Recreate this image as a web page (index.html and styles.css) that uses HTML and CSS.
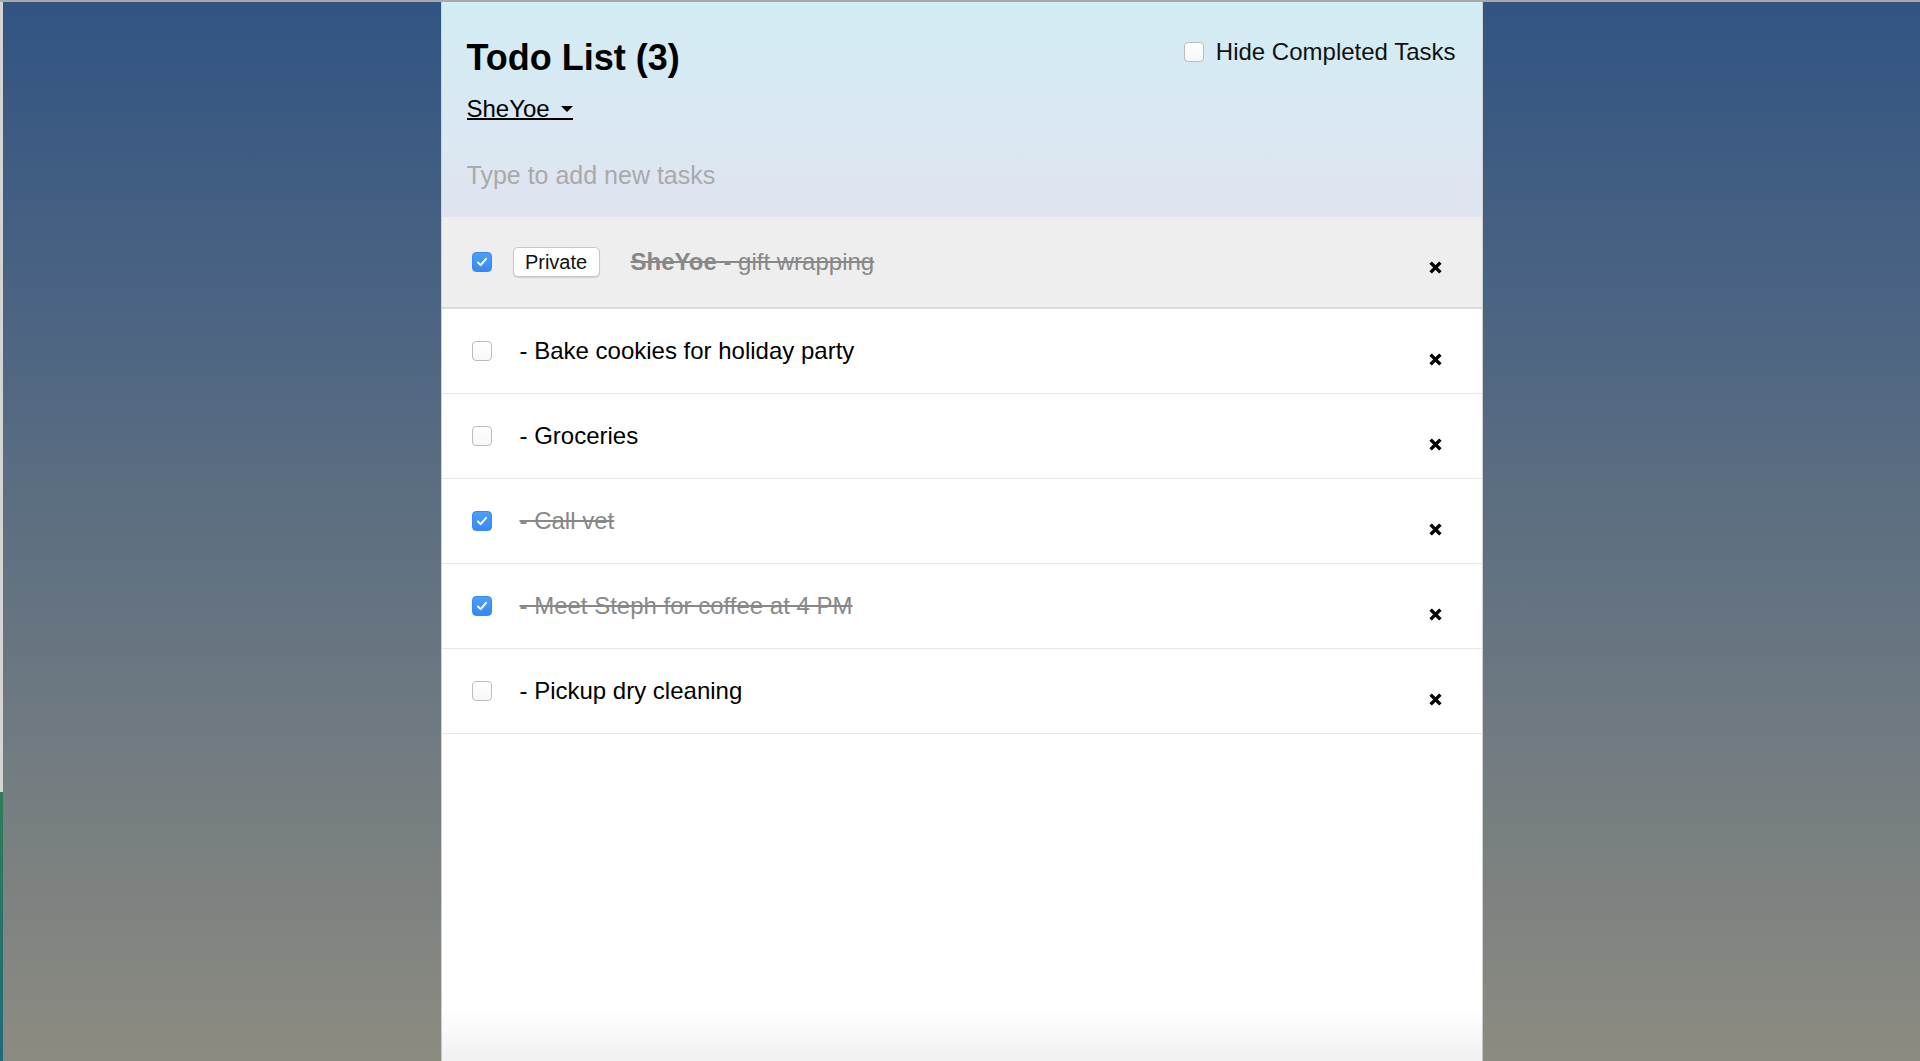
FILE: index.html
```html
<!DOCTYPE html>
<html lang="en">
<head>
    <meta charset="UTF-8">
    <meta name="viewport" content="width=device-width, initial-scale=1.0">
    <title>Todo List</title>
    <link rel="stylesheet" href="styles.css">
</head>
<body>

    <!-- sliver of the window behind -->
    <div class="edge"></div>

    <div class="stage">
        <div class="container">

            <header class="header">
                <div class="header-top">
                    <div>
                        <h1>Todo List (3)</h1>
                        <a class="user" href="#">SheYoe <span class="caret"></span></a>
                    </div>
                    <label class="hide-completed">
                        <span class="box"></span>
                        Hide Completed Tasks
                    </label>
                </div>
                <input class="new-task" type="text" placeholder="Type to add new tasks">
            </header>

            <ul class="tasks">
                <li class="task private checked">
                    <span class="box"><svg viewBox="0 0 20 20"><path d="M5.5 10.5l3 3 6-7"/></svg></span>
                    <button class="toggle-private">Private</button>
                    <span class="text"><strong>SheYoe</strong> - gift wrapping</span>
                    <span class="delete"><svg viewBox="0 0 12 12"><path d="M1.5 1.5l9 9M10.5 1.5l-9 9"/></svg></span>
                </li>
                <li class="task">
                    <span class="box"></span>
                    <span class="text">- Bake cookies for holiday party</span>
                    <span class="delete"><svg viewBox="0 0 12 12"><path d="M1.5 1.5l9 9M10.5 1.5l-9 9"/></svg></span>
                </li>
                <li class="task">
                    <span class="box"></span>
                    <span class="text">- Groceries</span>
                    <span class="delete"><svg viewBox="0 0 12 12"><path d="M1.5 1.5l9 9M10.5 1.5l-9 9"/></svg></span>
                </li>
                <li class="task checked">
                    <span class="box"><svg viewBox="0 0 20 20"><path d="M5.5 10.5l3 3 6-7"/></svg></span>
                    <span class="text">- Call vet</span>
                    <span class="delete"><svg viewBox="0 0 12 12"><path d="M1.5 1.5l9 9M10.5 1.5l-9 9"/></svg></span>
                </li>
                <li class="task checked">
                    <span class="box"><svg viewBox="0 0 20 20"><path d="M5.5 10.5l3 3 6-7"/></svg></span>
                    <span class="text">- Meet Steph for coffee at 4 PM</span>
                    <span class="delete"><svg viewBox="0 0 12 12"><path d="M1.5 1.5l9 9M10.5 1.5l-9 9"/></svg></span>
                </li>
                <li class="task">
                    <span class="box"></span>
                    <span class="text">- Pickup dry cleaning</span>
                    <span class="delete"><svg viewBox="0 0 12 12"><path d="M1.5 1.5l9 9M10.5 1.5l-9 9"/></svg></span>
                </li>
            </ul>

        </div>
    </div>

</body>
</html>
```

FILE: styles.css
```css
* { margin: 0; padding: 0; box-sizing: border-box; }

body {
    font-family: "Liberation Sans", Arial, sans-serif;
    height: 100vh;
    display: flex;
    overflow: hidden;
    border-top: 2px solid #a9a9a9;
    background: linear-gradient(180deg, #315483, #8c8b80);
}

/* thin strip of another window on the far left */
.edge {
    width: 3px;
    flex-shrink: 0;
    background: linear-gradient(180deg, #d4d4d4 0, #d4d4d4 790px, #2f7d57 790px, #1f6a7a 100%);
}

.stage {
    flex: 1;
    display: flex;
    justify-content: center;
}

.container {
    width: 1042px;
    height: 100%;
    background: linear-gradient(180deg, #fff 0, #fff 95%, #f1f1f1 100%);
    border-left: 1px solid rgba(0, 0, 0, 0.18);
    border-right: 1px solid rgba(0, 0, 0, 0.18);
}

/* Header */
.header {
    height: 215px;
    padding: 34px 26px 0 25px;
    background: linear-gradient(180deg, #d2edf5, #e0e4f0);
}

.header-top {
    display: flex;
    justify-content: space-between;
    align-items: flex-start;
}

h1 {
    font-size: 36px;
    line-height: 44px;
    font-weight: bold;
    color: #000;
}

.user {
    display: block;
    width: max-content;
    margin-top: 19px;
    font-size: 24px;
    line-height: 19px;
    color: #000;
    text-decoration: none;
    border-bottom: 2px solid #000;
}

.caret {
    display: inline-block;
    margin-left: 5px;
    vertical-align: 5px;
    border-left: 6px solid transparent;
    border-right: 6px solid transparent;
    border-top: 6px solid #000;
}

.hide-completed {
    display: flex;
    align-items: center;
    gap: 12px;
    margin-top: 2px;
    font-size: 24px;
    line-height: 28px;
    color: #111;
}

.new-task {
    display: block;
    width: 100%;
    height: 30px;
    margin-top: 40px;
    border: none;
    outline: none;
    background: transparent;
    font-family: "Liberation Sans", Arial, sans-serif;
    font-size: 25px;
    color: #333;
}

.new-task::placeholder { color: #aaa; }

/* Checkboxes */
.box {
    width: 20px;
    height: 20px;
    flex-shrink: 0;
    border: 1px solid #bcbcbc;
    border-radius: 4px;
    background: linear-gradient(180deg, #fff, #f7f7f7);
}

.box svg {
    display: block;
    width: 100%;
    height: 100%;
    fill: none;
    stroke: #fff;
    stroke-width: 2.2;
    stroke-linecap: round;
    stroke-linejoin: round;
}

.checked .box {
    border-color: #3a89ee;
    background: linear-gradient(180deg, #4aa0fb, #3689f3);
}

/* Task list */
.tasks { list-style: none; }

.task {
    display: flex;
    align-items: center;
    height: 85px;
    padding: 0 40px 0 30px;
    border-bottom: 1px solid #e6e6e6;
    font-size: 24px;
    line-height: 28px;
    color: #000;
}

.task.private {
    height: 92px;
    background: #eee;
    border-bottom: 2px solid #dcdcdc;
}

.task .text {
    flex: 1;
    margin-left: 28px;
}

.task.private .text { margin-left: 31px; }

.checked .text {
    color: #888;
    text-decoration: line-through;
}

.toggle-private {
    margin-left: 21px;
    width: 87px;
    height: 30px;
    font-family: "Liberation Sans", Arial, sans-serif;
    font-size: 20px;
    color: #111;
    background: #fff;
    border: 1px solid #c8c8c8;
    border-radius: 5px;
    box-shadow: 0 1px 1px rgba(0, 0, 0, 0.12);
}

.delete {
    align-self: flex-start;
    margin-top: 44px;
    width: 13px;
    height: 13px;
}

.delete svg {
    display: block;
    width: 13px;
    height: 13px;
    stroke: #000;
    stroke-width: 3.2;
}
```
